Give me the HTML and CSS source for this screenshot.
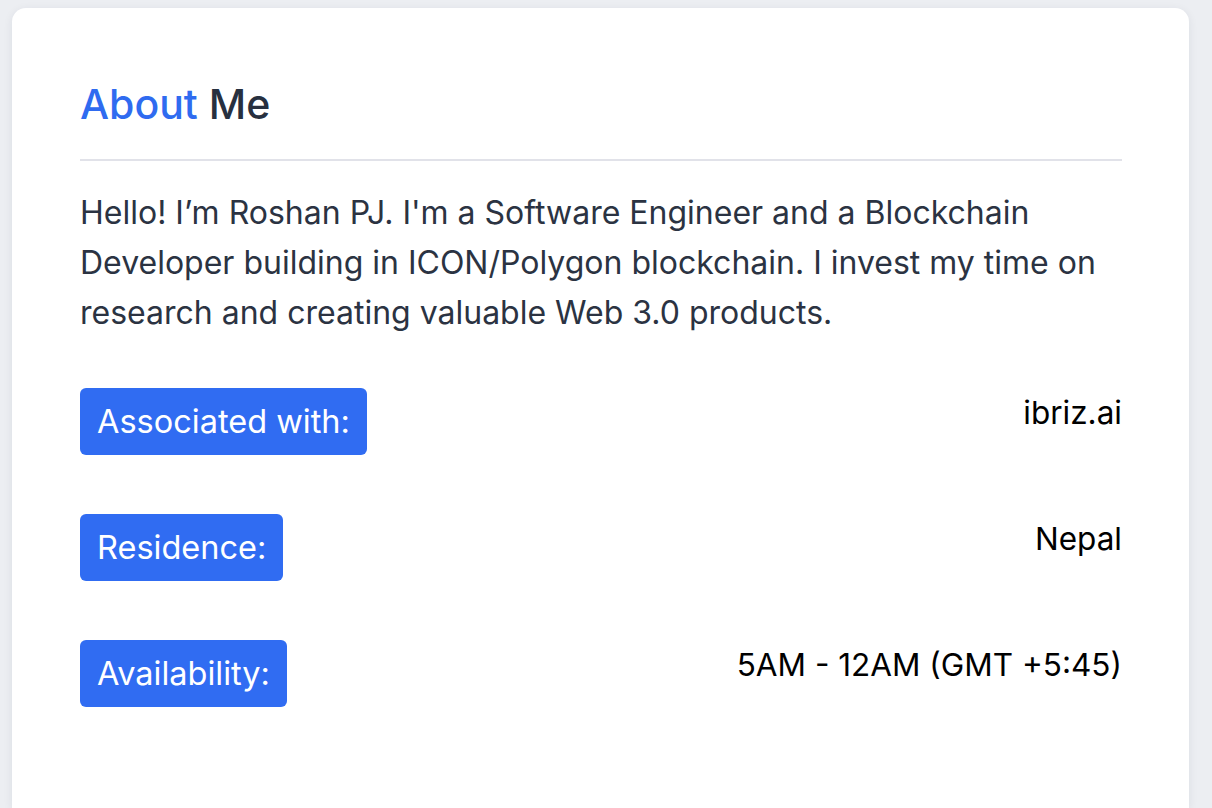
FILE: index.html
```html
<!DOCTYPE html>
<html>
<head>
<meta charset="utf-8">
<link rel="stylesheet" href="styles.css">
</head>
<body>
<section class="card">
  <h2 class="title"><span class="accent">About</span> Me</h2>
  <hr class="divider">
  <p class="bio">Hello! I’m Roshan PJ. I'm a Software Engineer and a Blockchain Developer building in ICON/Polygon blockchain. I invest my time on research and creating valuable Web 3.0 products.</p>
  <div class="info">
    <div class="row"><span class="badge">Associated with:</span><span class="value">ibriz.ai</span></div>
    <div class="row"><span class="badge">Residence:</span><span class="value">Nepal</span></div>
    <div class="row"><span class="badge">Availability:</span><span class="value">5AM - 12AM (GMT +5:45)</span></div>
  </div>
</section>
</body>
</html>
```
FILE: styles.css
```css
html, body {
  margin: 0;
  padding: 0;
  background: #eceef2;
  height: 100%;
  overflow: hidden;
}
body {
  font-family: Inter, "Open Sans", sans-serif;
}
.card {
  margin: 8px 23px 0 12px;
  background: #fff;
  border-radius: 14px 14px 0 0;
  box-shadow: 0 2px 10px rgba(30, 40, 70, 0.08);
  padding: 71px 67px 0 68px;
  height: calc(100vh - 8px);
  box-sizing: border-box;
}
.title {
  margin: 0;
  font-size: 41px;
  font-weight: 500;
  line-height: 50px;
  color: #27303f;
}
.accent { color: #2f6bf0; }
.divider {
  border: 0;
  height: 2px;
  background: #e1e2e9;
  margin: 30px 0 27px;
}
.bio {
  margin: 0;
  font-size: 32px;
  line-height: 50px;
  color: #2b3342;
}
.info {
  margin-top: 50px;
  display: flex;
  flex-direction: column;
  gap: 59px;
}
.row {
  display: flex;
  justify-content: space-between;
  align-items: flex-start;
}
.badge {
  background: #306cf2;
  color: #fff;
  font-size: 32.5px;
  line-height: 67px;
  height: 67px;
  padding: 0 17px;
  border-radius: 6px;
}
.value {
  font-size: 31.5px;
  line-height: 50px;
  color: #000;
}
```
